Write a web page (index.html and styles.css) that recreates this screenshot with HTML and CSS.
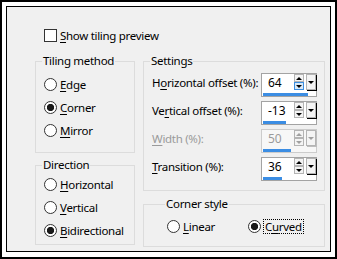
FILE: index.html
```html
<!DOCTYPE html>
<html>

<head>
    <title>Seamless Tiling</title>
    <link rel="stylesheet" href="styles.css">
</head>

<body>
    <div class="frame">
        <div class="dialog">
            <div class="checkRow">
                <span class="checkbox"></span>
                <span><u>S</u>how tiling preview</span>
            </div>

            <div class="columns">
                <div class="colLeft">
                    <fieldset class="group tiling">
                        <legend>Tiling method</legend>
                        <div class="option"><span class="radio"></span><span><u>E</u>dge</span></div>
                        <div class="option"><span class="radio checked"></span><span><u>C</u>orner</span></div>
                        <div class="option"><span class="radio"></span><span><u>M</u>irror</span></div>
                    </fieldset>

                    <fieldset class="group direction">
                        <legend>Direction</legend>
                        <div class="option"><span class="radio"></span><span><u>H</u>orizontal</span></div>
                        <div class="option"><span class="radio"></span><span><u>V</u>ertical</span></div>
                        <div class="option"><span class="radio checked"></span><span><u>B</u>idirectional</span></div>
                    </fieldset>
                </div>

                <div class="colRight">
                    <fieldset class="group settings">
                        <legend>Settings</legend>

                        <div class="field">
                            <span class="fieldLabel">H<u>o</u>rizontal offset (%):</span>
                            <div class="spin">
                                <div class="spinTop">
                                    <span class="spinValue">64</span>
                                    <span class="spinArrows">
                                        <span class="arrowBox"><span class="triUp"></span></span>
                                        <span class="arrowBox hot"><span class="triDown"></span></span>
                                    </span>
                                    <span class="dropBtn"><span class="triDown"></span></span>
                                </div>
                                <div class="spinBar" style="width: 45px"></div>
                            </div>
                        </div>

                        <div class="field">
                            <span class="fieldLabel">Ve<u>r</u>tical offset (%):</span>
                            <div class="spin">
                                <div class="spinTop">
                                    <span class="spinValue">-13</span>
                                    <span class="spinArrows">
                                        <span class="arrowBox"><span class="triUp"></span></span>
                                        <span class="arrowBox"><span class="triDown"></span></span>
                                    </span>
                                    <span class="dropBtn"><span class="triDown"></span></span>
                                </div>
                                <div class="spinBar" style="width: 23px"></div>
                            </div>
                        </div>

                        <div class="field disabled">
                            <span class="fieldLabel"><u>W</u>idth (%):</span>
                            <div class="spin">
                                <div class="spinTop">
                                    <span class="spinValue">50</span>
                                    <span class="spinArrows">
                                        <span class="arrowBox"><span class="triUp"></span></span>
                                        <span class="arrowBox"><span class="triDown"></span></span>
                                    </span>
                                    <span class="dropBtn"><span class="triDown"></span></span>
                                </div>
                                <div class="spinBar" style="width: 28px"></div>
                            </div>
                        </div>

                        <div class="field">
                            <span class="fieldLabel"><u>T</u>ransition (%):</span>
                            <div class="spin">
                                <div class="spinTop">
                                    <span class="spinValue">36</span>
                                    <span class="spinArrows">
                                        <span class="arrowBox"><span class="triUp"></span></span>
                                        <span class="arrowBox"><span class="triDown"></span></span>
                                    </span>
                                    <span class="dropBtn"><span class="triDown"></span></span>
                                </div>
                                <div class="spinBar" style="width: 19px"></div>
                            </div>
                        </div>
                    </fieldset>

                    <fieldset class="group corner">
                        <legend>Corner style</legend>
                        <div class="cornerRow">
                            <div class="option linear"><span class="radio"></span><span><u>L</u>inear</span></div>
                            <div class="option"><span class="radio checked"></span><span class="focused">C<u>u</u>rved</span></div>
                        </div>
                    </fieldset>
                </div>
            </div>
        </div>
    </div>
</body>

</html>
```

FILE: styles.css
```css
html {
    font-family: "Noto Sans", "Open Sans", sans-serif;
    font-size: 11.5px;
    letter-spacing: -0.3px;
    color: #000;
}

body {
    margin: 0px;
}

u {
    text-decoration-thickness: 1px;
    text-underline-offset: 2px;
}

.frame {
    width: 337px;
    height: 259px;
    box-sizing: border-box;
    border: 2px solid #000;
    background-color: #fff;
    padding: 4px 4px 5px 4px;
}

.dialog {
    height: 100%;
    box-sizing: border-box;
    border: 1px solid #000;
    background-color: #f0f0f0;
    padding: 20px 0px 0px 28px;
}

.checkRow {
    display: flex;
    align-items: center;
    height: 16px;
    margin-left: 9px;
}

.checkbox {
    width: 13px;
    height: 13px;
    box-sizing: border-box;
    border: 1px solid #333;
    background-color: #fff;
    margin-right: 3px;
}

.columns {
    display: flex;
    gap: 8px;
    margin-top: 11px;
}

.colLeft {
    width: 100px;
    display: flex;
    flex-direction: column;
    gap: 5px;
}

.colRight {
    width: 182px;
    display: flex;
    flex-direction: column;
    gap: 6px;
}

.group {
    margin: 0px;
    min-width: 0px;
    border: 1px solid #dcdcdc;
    padding: 0px 0px 0px 8px;
}

.group legend {
    margin-left: -2px;
    padding: 0px 1px;
    line-height: 14px;
}

.tiling {
    padding-top: 5px;
    padding-bottom: 10px;
}

.direction {
    padding-top: 1px;
    padding-bottom: 2px;
}

.option {
    display: flex;
    align-items: center;
    height: 23px;
}

.radio {
    width: 13px;
    height: 13px;
    box-sizing: border-box;
    border: 1px solid #333;
    border-radius: 50%;
    background-color: #fff;
    margin-right: 3px;
}

.radio.checked {
    background: radial-gradient(circle, #1a1a1a 0px, #1a1a1a 3.3px, #fff 4px);
}

.settings {
    padding: 5px 7px 9px 8px;
}

.field {
    display: flex;
    height: 24px;
    margin-bottom: 4px;
}

.field:last-child {
    margin-bottom: 0px;
}

.fieldLabel {
    width: 109px;
    line-height: 19px;
    white-space: nowrap;
}

.spin {
    width: 56px;
    height: 24px;
    box-sizing: border-box;
    border: 1px solid #a3a3a3;
    background-color: #fff;
    display: flex;
    flex-direction: column;
}

.spinTop {
    display: flex;
    height: 18px;
}

.spinValue {
    width: 32px;
    padding-left: 6px;
    box-sizing: border-box;
    line-height: 18px;
    font-size: 12px;
    letter-spacing: 0px;
}

.spinArrows {
    width: 10px;
    height: 16px;
    display: flex;
    flex-direction: column;
    margin-right: 2px;
}

.arrowBox {
    height: 8px;
    box-sizing: border-box;
    border: 1px solid #b4b4b4;
    background-color: #f4f4f4;
    display: flex;
    align-items: center;
    justify-content: center;
}

.arrowBox.hot {
    border-color: #3c8ee0;
    background-color: #d8e9f8;
}

.dropBtn {
    width: 10px;
    height: 16px;
    box-sizing: border-box;
    border: 1px solid #b4b4b4;
    background-color: #f4f4f4;
    box-shadow: 1px 1px 0px #000;
    display: flex;
    align-items: center;
    justify-content: center;
}

.triUp {
    width: 0px;
    height: 0px;
    border-left: 3px solid transparent;
    border-right: 3px solid transparent;
    border-bottom: 3px solid #000;
}

.triDown {
    width: 0px;
    height: 0px;
    border-left: 3px solid transparent;
    border-right: 3px solid transparent;
    border-top: 3px solid #000;
}

.spinBar {
    height: 3px;
    margin-top: 1px;
    margin-left: 1px;
    background-color: #3b8de3;
}

.disabled .fieldLabel,
.disabled .spinValue {
    color: #9a9a9a;
}

.disabled .spin {
    border-color: #cccccc;
    background-color: #f7f7f7;
}

.disabled .triUp {
    border-bottom-color: #a0a0a0;
}

.disabled .triDown {
    border-top-color: #a0a0a0;
}

.disabled .dropBtn {
    box-shadow: 1px 1px 0px #bdbdbd;
}

.corner {
    padding: 4px 0px 8px 23px;
}

.cornerRow {
    display: flex;
}

.option.linear {
    width: 81px;
}

.focused {
    border: 1px dotted #000;
    padding: 0px 1px;
    line-height: 13px;
    margin-left: -1px;
}
```
